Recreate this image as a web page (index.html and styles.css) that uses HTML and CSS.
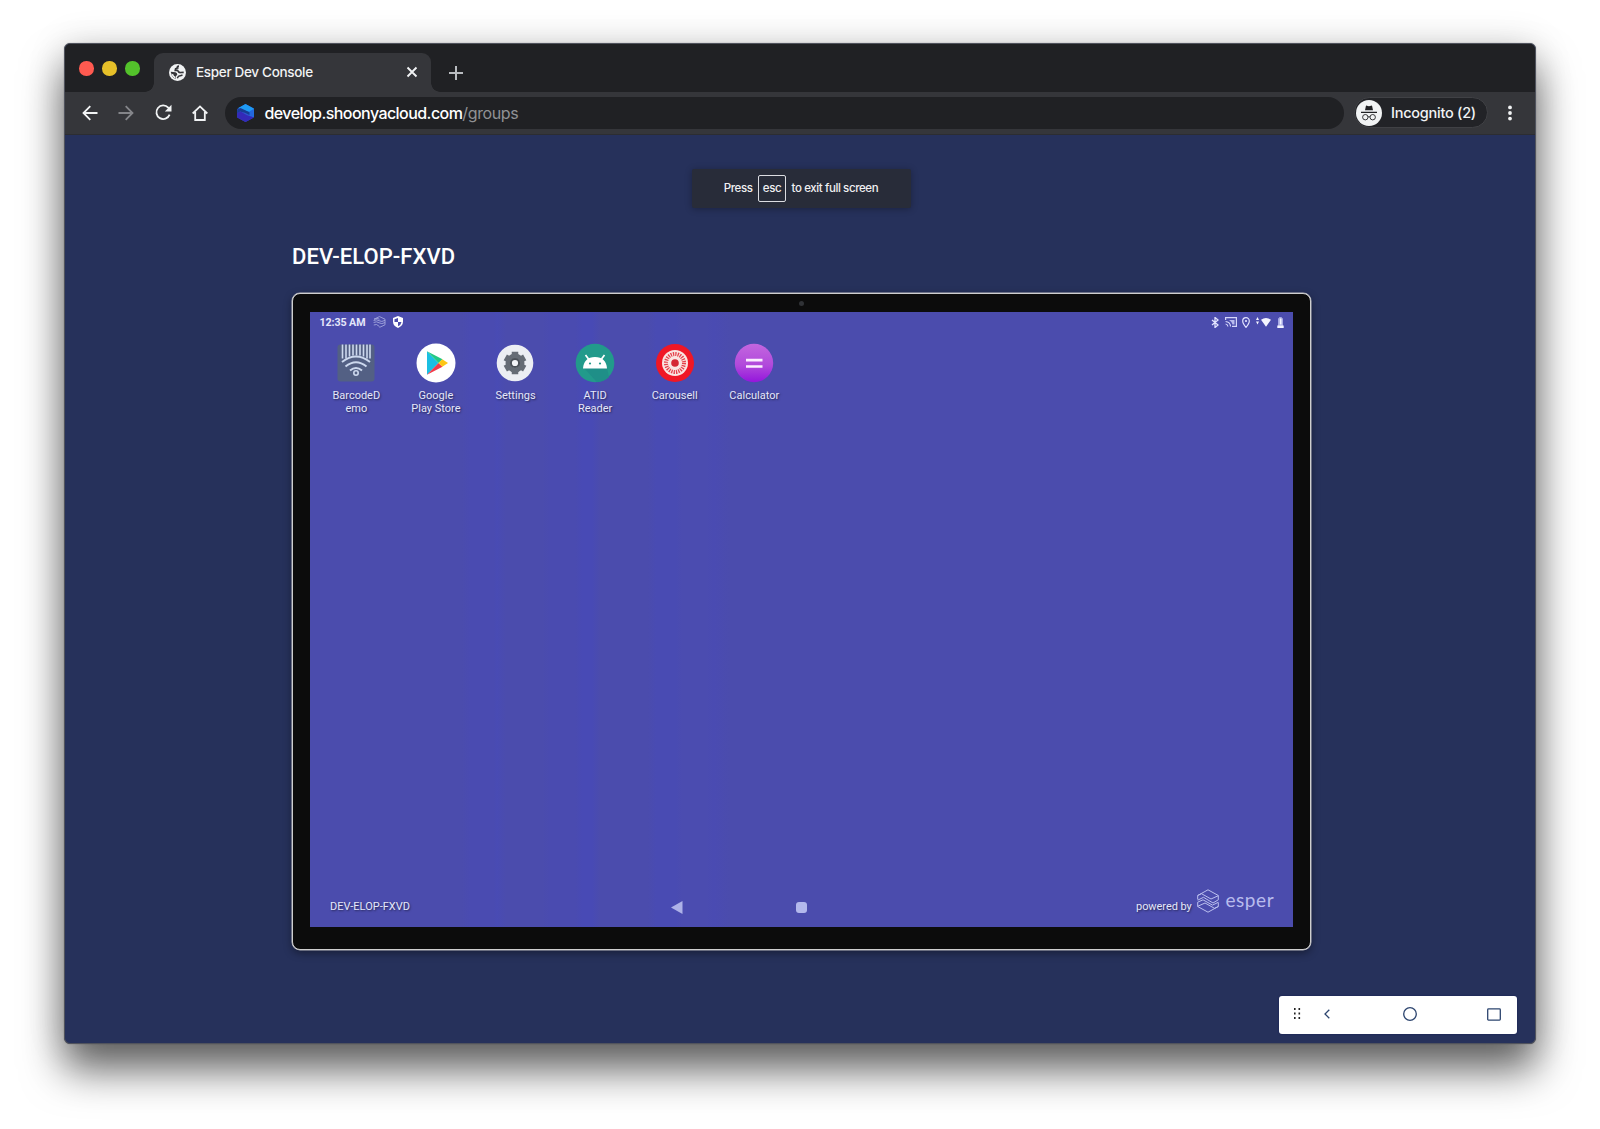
FILE: index.html
```html
<!DOCTYPE html>
<html lang="en">
<head>
<meta charset="utf-8">
<title>Esper Dev Console</title>
<link rel="stylesheet" href="styles.css">
</head>
<body>
<div class="window">
  <header class="tabs">
    <div class="lights"><i class="light red"></i><i class="light yellow"></i><i class="light green"></i></div>
    <div class="tab">
      <svg class="globe" width="17" height="17" viewBox="0 0 17 17"><circle cx="8.500" cy="8.500" r="8.500" fill="#f1f3f4"/><path d="M10 2.200Q7.500 2.300 8.700 3.900L6.600 4.800 6.300 6.300H8.500Q9.800 8.800 11.500 8.500L14.700 8.300" fill="none" stroke="#35363a" stroke-width="1.700"/><path d="M1.800 7.800L6.500 8.300Q8.500 8.800 8.300 11L6.900 12V14.900Q2 13.500 1.800 7.800z" fill="#35363a"/><path d="M2.200 9.500L4.500 10.500 5 12 6.300 12.600 6.800 14.800Q3.200 13.600 2.200 9.500z" fill="#f1f3f4"/><path d="M8.300 14.200Q9.300 11.300 11.500 11.700L13.500 11" fill="none" stroke="#35363a" stroke-width="1.500"/></svg>
      <span class="tab-title">Esper Dev Console</span>
      <svg class="close" width="12" height="12" viewBox="0 0 12 12"><path d="M1.500 1.500l9 9m0-9l-9 9" stroke="#f1f3f4" stroke-width="1.900"/></svg>
    </div>
    <svg class="plus" width="14" height="14" viewBox="0 0 14 14"><path d="M7 0v14M0 7h14" stroke="#b9bcc0" stroke-width="2"/></svg>
  </header>
  <div class="toolbar">
    <svg width="16" height="16" viewBox="0 0 16 16"><path d="M15.500 8H1.500M8.300 1.200L1.500 8l6.800 6.800" fill="none" stroke="#f1f3f4" stroke-width="1.800"/></svg>
    <svg width="16" height="16" viewBox="0 0 16 16"><path d="M.5 8h14M7.700 1.200L14.500 8l-6.800 6.800" fill="none" stroke="#848589" stroke-width="1.800"/></svg>
    <svg width="17" height="17" viewBox="0 0 17 17"><path d="M14.600 10.600A6.800 6.800 0 1 1 13.300 3.700L15.500 6" fill="none" stroke="#f1f3f4" stroke-width="1.800"/><path d="M16.500 .8V7.500H9.800z" fill="#f1f3f4"/></svg>
    <svg width="16" height="16" viewBox="0 0 16 16"><path d="M3.200 7v8h9.600V7M.7 8.500L8 1.400l7.300 7.100" fill="none" stroke="#f1f3f4" stroke-width="1.800"/></svg>
    <div class="address">
      <svg width="17" height="18" viewBox="0 0 17 18"><path d="M8.500 0L16.800 4.600V13.400L8.500 18L.2 13.400V5z" fill="#2d55cf"/><path d="M1.200 4L8.500 0L16.800 4.600V13l-4.300-2V8L4 5.500z" fill="#1e9bf5"/><path d="M16.800 5v8.200L12.300 11V7.500z" fill="#2467dd"/><path d="M.3 5.500L3.500 4l9 4.200V11L8 8.800 3 7.500.3 9.500z" fill="#173c94"/><path d="M.2 9L3.600 7.600 10 11.200l6.800 2.200L8.500 18 .2 13.400z" fill="#3429b8"/></svg>
      <span class="url">develop.shoonyacloud.com<span class="path">/groups</span></span>
    </div>
    <div class="incognito">
      <svg width="26" height="26" viewBox="0 0 26 26"><circle cx="13" cy="13" r="13" fill="#f1f3f4"/><path d="M9 10.300l1-4.700 3 .7 3-.7 1 4.700z" fill="#202124"/><path d="M5 12.400h16" stroke="#202124" stroke-width="1.100"/><g fill="none" stroke="#202124" stroke-width=".9"><circle cx="9.300" cy="17.200" r="2.700"/><circle cx="16.700" cy="17.200" r="2.700"/><path d="M12 17q1-.7 2 0"/></g></svg>
      <span>Incognito (2)</span>
    </div>
    <svg class="more" width="4" height="16" viewBox="0 0 4 16" fill="#f1f3f4"><circle cx="2" cy="2.400" r="1.900"/><circle cx="2" cy="8" r="1.900"/><circle cx="2" cy="13.600" r="1.900"/></svg>
  </div>
  <main class="page">
    <div class="toast"><span>Press</span><kbd>esc</kbd><span>to exit full screen</span></div>
    <h1>DEV-ELOP-FXVD</h1>
    <section class="device">
      <i class="camera"></i>
      <div class="screen">
        <div class="status">
          <span>12:35 AM</span>
          <svg class="st-esper" width="13" height="12" viewBox="0 0 13 12" fill="none" stroke="#a3a6dc" stroke-width=".9"><path d="M1 3.200L6.500.6 12 3.200v5.600L6.500 11.400M.6 4.500q3-1.500 5.500.2t6-.4M.6 6.500q3-1.500 5.500.3t6-.3M.8 9q2.500-1.800 5.700 1.500M1 3.200q3.500-1.500 5.500 0"/></svg>
          <svg class="st-shield" width="10" height="12" viewBox="0 0 10 12"><path d="M5 0l5 1.900V5.500Q9.800 10 5 12 .2 10 0 5.500V1.900z" fill="#fff"/><path d="M5 2v4H1.500V3.200zM5 6h3.500Q8 9 5 10.300z" fill="#4b4cad"/></svg>
          <div class="st-right">
            <svg width="8" height="11" viewBox="0 0 8 11"><path d="M1 3l6 5-3 2.500V.5L7 3 1 8" fill="none" stroke="#e3e4ff" stroke-width="1.300"/></svg>
            <svg width="12" height="10" viewBox="0 0 12 10" fill="none" stroke="#d5d6fa" stroke-width="1.200"><path d="M4 3h5.500v4.500H7.500Q7 4.500 4 3z" fill="#b9bbee" stroke="none"/><path d="M.6 3V.6h10.800v8.800H7M.6 4.500q4.500.3 5 5M.6 7q2 .3 2.300 2.500"/></svg>
            <svg width="8" height="11" viewBox="0 0 8 11"><path d="M4 10.300Q.7 6.500.7 4a3.300 3.300 0 0 1 6.600 0Q7.300 6.500 4 10.300z" fill="none" stroke="#e3e4ff" stroke-width="1.200"/><circle cx="4" cy="4" r="1.100" fill="#e3e4ff"/></svg>
            <svg width="15" height="10" viewBox="0 0 15 10" fill="#f4f4ff"><path d="M1.500 0L3 3H0zM1.500 7.500L0 4.500h3zM5 2.700q5-3.500 10 0L10 9.700z"/></svg>
            <svg width="7" height="11" viewBox="0 0 7 11"><path d="M2.200 0h2.600v1.200H6V11H1V1.200h1.200z" fill="#a6a8e4"/><path d="M2.800 1.500h1.700v6H2.800zM.3 8.500h6.400V11H.3z" fill="#f4f4ff"/></svg>
          </div>
        </div>
        <div class="apps">
          <div class="app">
            <svg width="40" height="40" viewBox="0 0 40 40"><rect x="1.500" y="1.500" width="37" height="37" rx="3" fill="#536084"/><path d="M6.500 1.500v14M10 1.500v14M13.500 1.500v12M17 1.500v11M20.500 1.500v11M24 1.500v11M27.500 1.500v12M31 1.500v14M34 1.500v14" stroke="#ccd8ee" stroke-width="1.600"/><path d="M6 19q14-11 28 0M9.500 23.500q10.500-8.500 21 0M14 27.500q6-5 12 0" fill="none" stroke="#ccd8ee" stroke-width="2"/><circle cx="20" cy="30" r="2.200" fill="none" stroke="#ccd8ee" stroke-width="1.600"/></svg>
            <span>BarcodeD<br>emo</span>
          </div>
          <div class="app">
            <svg width="40" height="40" viewBox="0 0 40 40"><circle cx="20" cy="20" r="19.500" fill="#fff"/><path d="M11 8.300L22.500 20 11 31.700z" fill="#1bbfe2"/><path d="M11 8.300l15.500 8L22.500 20z" fill="#22c884"/><path d="M11 31.700l15.500-8L22.500 20z" fill="#f13b4a"/><path d="M26.300 16.200L32 20l-5.700 3.800L22.500 20z" fill="#fdc615"/></svg>
            <span>Google<br>Play Store</span>
          </div>
          <div class="app">
            <svg width="40" height="40" viewBox="0 0 40 40"><circle cx="20" cy="20" r="18.300" fill="#eceef3"/><circle cx="20" cy="20" r="7" fill="none" stroke="#666c75" stroke-width="5"/><g stroke="#666c75" stroke-width="6.500"><path d="M20 8.800v5M20 31.200v-5M10.300 14.400l4 2.300M29.700 25.600l-4-2.300M10.300 25.600l4-2.300M29.700 14.400l-4 2.300"/></g><circle cx="20" cy="20" r="4.100" fill="#f4f5f8" stroke="#4b5058" stroke-width="2"/></svg>
            <span>Settings</span>
          </div>
          <div class="app">
            <svg width="40" height="40" viewBox="0 0 40 40"><circle cx="20" cy="20" r="19.300" fill="#229a8b"/><path d="M9 25h23l2 9q-5 5-12 5.300z" fill="#1f8f88"/><path d="M8 25.500q1-11.500 12-11.500t12 11.500z" fill="#fff"/><path d="M13.500 16l-3-4M26.500 16l3-4" stroke="#fff" stroke-width="1.700"/><circle cx="15" cy="20.500" r="1.100" fill="#229a8b"/><circle cx="25" cy="20.500" r="1.100" fill="#229a8b"/></svg>
            <span>ATID<br>Reader</span>
          </div>
          <div class="app">
            <svg width="40" height="40" viewBox="0 0 40 40"><circle cx="20" cy="20" r="19" fill="#f01725"/><circle cx="20" cy="20" r="13" fill="#f9e6e2"/><circle cx="20" cy="20" r="9" fill="none" stroke="#e5404a" stroke-width="4" stroke-dasharray="1.300 1.056"/><circle cx="20" cy="20" r="4.800" fill="#d52733" stroke="#fae6e3" stroke-width="2"/></svg>
            <span>Carousell</span>
          </div>
          <div class="app">
            <svg width="40" height="40" viewBox="0 0 40 40"><defs><linearGradient id="calc" x2="0" y2="1"><stop offset="0" stop-color="#c366df"/><stop offset=".55" stop-color="#b14adb"/><stop offset="1" stop-color="#9416dc"/></linearGradient></defs><circle cx="20" cy="20" r="19.200" fill="url(#calc)"/><path d="M12 17.200h16.500M12 23.500h16.500" stroke="#fbeeff" stroke-width="2.700"/></svg>
            <span>Calculator</span>
          </div>
        </div>
        <footer class="dock">
          <span class="name">DEV-ELOP-FXVD</span>
          <svg class="back" width="12" height="13" viewBox="0 0 12 13"><path d="M0 6.500L11.500 0v13z" fill="#aeb2e8"/></svg>
          <i class="home"></i>
          <span class="powered">powered by</span>
          <svg class="brand-mark" width="22" height="24" viewBox="0 0 22 24" fill="none" stroke="#bcc0ef" stroke-width="1"><path d="M.7 10.500v-4L11 .8l10.300 5.700v4.300L16 14 6.500 8.300.7 11.200M.7 6.500L4.500 4.700 14 10l7.300-3.300M21.300 13.500v4L11 23.200.7 17.500v-4.300L6 10.800l9.500 5.300 5.800-2.800M21.300 17.500l-3.800 1.800L8 14 .7 17.300"/></svg>
          <span class="brand">esper</span>
        </footer>
      </div>
    </section>
    <div class="remote">
      <svg width="7" height="12" viewBox="0 0 7 12" fill="#222"><path d="M0 0h1.600v2H0zM4.500 0h1.600v2h-1.600zM0 4.500h1.600v2H0zM4.500 4.500h1.600v2h-1.600zM0 9h1.600v2H0zM4.500 9h1.600v2h-1.600z"/></svg>
      <svg class="r-back" width="6" height="10" viewBox="0 0 6 10"><path d="M5.300 .8L1 5l4.300 4.200" fill="none" stroke="#2d456f" stroke-width="1.300"/></svg>
      <svg class="r-home" width="14" height="14" viewBox="0 0 14 14"><circle cx="7" cy="7" r="6.300" fill="none" stroke="#2d456f" stroke-width="1.300"/></svg>
      <svg class="r-apps" width="14" height="13" viewBox="0 0 14 13"><rect x=".7" y=".9" width="12.600" height="11.200" rx=".8" fill="none" stroke="#2d456f" stroke-width="1.300"/></svg>
    </div>
  </main>
</div>
</body>
</html>
```
FILE: styles.css
```css
* { box-sizing: border-box; }
body { margin: 0; height: 1129px; padding: 43px 64px; background: #fff; overflow: hidden; font-family: Inter, sans-serif; }
svg { display: block; flex: none; }
.window { width: 1472px; height: 1001px; border-radius: 6px; overflow: hidden; background: #26315b; display: flex; flex-direction: column; border: 1px solid #50535d; box-shadow: 0 0 1px rgba(0,0,0,.5), 0 26px 42px rgba(0,0,0,.6), 0 2px 38px rgba(0,0,0,.14); }
.tabs { height: 48px; background: #202124; display: flex; align-items: flex-end; flex: none; padding-left: 14px; }
.lights { display: flex; gap: 8.500px; width: 75px; height: 48px; padding-top: 17px; }
.light { width: 14.500px; height: 14.500px; border-radius: 50%; }
.red { background: #ff5a50; }
.yellow { background: #e6c029; }
.green { background: #53c22b; }
.tab { position: relative; width: 277px; height: 39px; background: #35363a; border-radius: 9px 9px 0 0; display: flex; align-items: center; padding: 0 13px 1px 15px; color: #f1f3f4; }
.tab::before, .tab::after { content: ""; position: absolute; bottom: 0; width: 9px; height: 9px; }
.tab::before { left: -9px; background: radial-gradient(circle at 0 0, transparent 8.500px, #35363a 9px); }
.tab::after { right: -9px; background: radial-gradient(circle at 100% 0, transparent 8.500px, #35363a 9px); }
.tab-title { font-size: 13.500px; font-weight: 500; margin-left: 10px; flex: 1; white-space: nowrap; letter-spacing: -.32px; }
.plus { margin: 0 0 12.500px 18px; }
.toolbar { height: 43px; flex: none; background: #35363a; display: flex; align-items: center; gap: 20.500px; padding: 0 23px 1px 16.500px; border-bottom: 1px solid #2c2d31; }
.address { width: 1118.500px; height: 32px; margin-left: -3.500px; border-radius: 16px; background: #202124; display: flex; align-items: center; padding-left: 12px; gap: 10.500px; color: #fff; font-size: 16px; }
.url { letter-spacing: -.56px; font-weight: 500; white-space: nowrap; }
.path { color: #909194; font-weight: 400; letter-spacing: -.38px; }
.incognito { width: 134px; height: 31px; margin-left: -10.500px; border-radius: 16px; background: #222327; border: 1px solid #404145; display: flex; align-items: center; gap: 9.500px; padding-left: 1px; color: #f1f3f4; font-size: 14.500px; font-weight: 500; letter-spacing: -.25px; white-space: nowrap; }
.more { margin-left: -.5px; }
.page { flex: 1; display: flex; flex-direction: column; align-items: center; padding-top: 34px; }
.toast { width: 219px; height: 39px; margin-left: 3px; background: #282c39; border-radius: 2px; box-shadow: 0 1px 7px rgba(0,0,0,.3); display: flex; align-items: center; justify-content: center; gap: 5.500px; color: #f0f0f2; font-size: 11.500px; font-weight: 500; letter-spacing: -.4px; white-space: nowrap; padding: 0 1px 1px 0; }
.toast kbd { font: inherit; width: 28px; height: 27px; border: 1px solid #dcdde2; border-radius: 2px; display: flex; align-items: center; justify-content: center; }
h1 { width: 1019px; margin: 34px 0 0 3px; height: 30px; color: #fff; font: 500 22px/30px Roboto, sans-serif; letter-spacing: .05px; }
.device { width: 1019px; height: 657px; margin: 21px 0 0 3px; background: #0c0c0c; border: 1.500px solid #cfcfcf; border-radius: 8px; padding: 0 17px 0 17px; display: flex; flex-direction: column; align-items: center; box-shadow: 0 0 0 .5px #b9bac0, 0 3px 9px rgba(0,0,0,.4); }
.camera { width: 5px; height: 5px; border-radius: 50%; background: #303236; margin: 7px 0 6px; }
.screen { width: 983px; height: 615px; background: linear-gradient(90deg, #4b4cad 0 152px, #4a4bb1 160px 184px, #494bb4 187px, #4b4cad 196px 232px, #4a4bb0 240px 266px, #484ab5 272px 282px, #4b4cad 290px 338px, #494bb3 346px 366px, #4b4cb0 372px 396px, #4a4bb2 404px, #4b4cad 420px); display: flex; flex-direction: column; font-family: Roboto, sans-serif; color: #e5e7fb; }
.status { height: 20px; display: flex; align-items: center; padding: 0 9px 0 9.500px; font-size: 10.700px; font-weight: 700; letter-spacing: -.1px; white-space: nowrap; }
.st-esper { margin-left: 8px; }
.st-shield { margin-left: 7px; }
.st-right { margin-left: auto; display: flex; align-items: center; gap: 6px; }
.st-right svg:nth-child(2), .st-right svg:nth-child(3) { margin-left: -.5px; }
.apps { display: flex; padding: 11px 0 0 6.500px; }
.app { width: 79.600px; display: flex; flex-direction: column; align-items: center; font-size: 11px; line-height: 12.500px; text-align: center; text-shadow: 1px 1px 2px rgba(0,0,0,.5); }
.app span { margin-top: 7px; white-space: nowrap; }
.dock { margin: auto 0 1px; height: 44px; display: flex; align-items: center; padding: 0 0 0 20px; font-size: 11px; }
.name { width: 341px; text-shadow: 1px 1px 2px rgba(0,0,0,.5); }
.back { margin-top: 6px; }
.home { width: 11px; height: 11px; border-radius: 3px; background: #b3b8ec; margin: 6px 0 0 113px; }
.powered { margin-left: 329px; width: 61px; white-space: nowrap; text-shadow: 1px 1px 2px rgba(0,0,0,.5); letter-spacing: -.05px; }
.brand-mark { margin-top: -7px; }
.brand { font-family: Lato, sans-serif; font-size: 19px; font-weight: 400; letter-spacing: .55px; margin: -9px 0 0 6.500px; color: #b9bced; }
.name, .powered { padding-top: 5px; }
.remote { width: 238px; height: 38px; margin: auto 18px 9px auto; background: #fff; border-radius: 3px; display: flex; align-items: center; padding: 0 16.500px 2px 14.500px; box-shadow: 0 0 2px #101b55; }
.r-back { margin-left: 23.500px; }
.r-home { margin-left: 73px; }
.r-apps { margin-left: auto; }
```
